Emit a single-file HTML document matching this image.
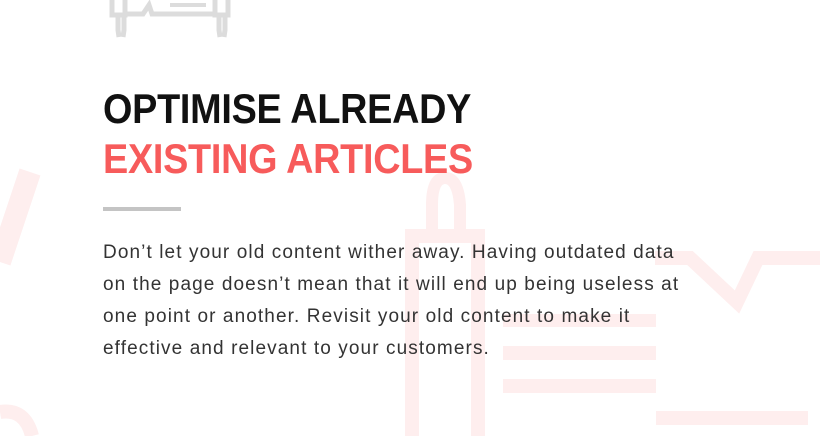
<!DOCTYPE html>
<html><head><meta charset="utf-8"><style>
html,body{margin:0;padding:0;background:#fff;}
body{width:820px;height:436px;position:relative;overflow:hidden;font-family:"Liberation Sans",sans-serif;}
svg{position:absolute;left:0;top:0;}
.t{position:absolute;left:103px;font-weight:bold;font-size:42px;line-height:50px;white-space:nowrap;transform-origin:left top;transform:scaleX(0.9);letter-spacing:-0.3px;}
.rule{position:absolute;left:103px;top:207px;width:78px;height:4px;background:#c4c4c4;}
.p{position:absolute;left:103px;top:237px;width:700px;font-size:19px;line-height:32px;color:#333;letter-spacing:1.1px;white-space:nowrap;}
</style></head><body>
<svg width="820" height="436" viewBox="0 0 820 436">
<g fill="none" stroke="#feeeee" stroke-width="14">
<path d="M412 436 V236 H478 V436"/>
<path d="M432 236 V205 Q432 178 445 178 Q458 178 460 205 V236" stroke-width="12"/>
<path d="M655 258 H690 L737 302 L758 258 H820"/>
<path d="M30 172 L0 262" stroke-width="22"/>
<path d="M0 412 Q25 408 32 436" stroke-width="14"/>
</g>
<g fill="#feeeee">
<rect x="503" y="314" width="153" height="13"/>
<rect x="503" y="346" width="153" height="14"/>
<rect x="503" y="379" width="153" height="14"/>
<rect x="656" y="411" width="152" height="14"/>
</g>
<g fill="none" stroke="#dcdcdc" stroke-width="5">
<path d="M112 0 V15 H125 V0"/>
<path d="M215 0 V15 H228 V0"/>
<path d="M125 14 H143 L149 5 L152 14 H215"/>
<path d="M118 17 V30 L119 37 M124 17 V30 L123 37"/>
<path d="M219 17 V30 L220 37 M225 17 V30 L224 37"/>
</g>
<rect x="170" y="3" width="36" height="4" fill="#dcdcdc"/>
</svg>
<div class="t" style="top:84px;color:#111;">OPTIMISE ALREADY</div>
<div class="t" style="top:134px;color:#f75b5b;">EXISTING ARTICLES</div>
<div class="rule"></div>
<div class="p">Don’t let your old content wither away. Having outdated data<br>on the page doesn’t mean that it will end up being useless at<br>one point or another. Revisit your old content to make it<br>effective and relevant to your customers.</div>
</body></html>
